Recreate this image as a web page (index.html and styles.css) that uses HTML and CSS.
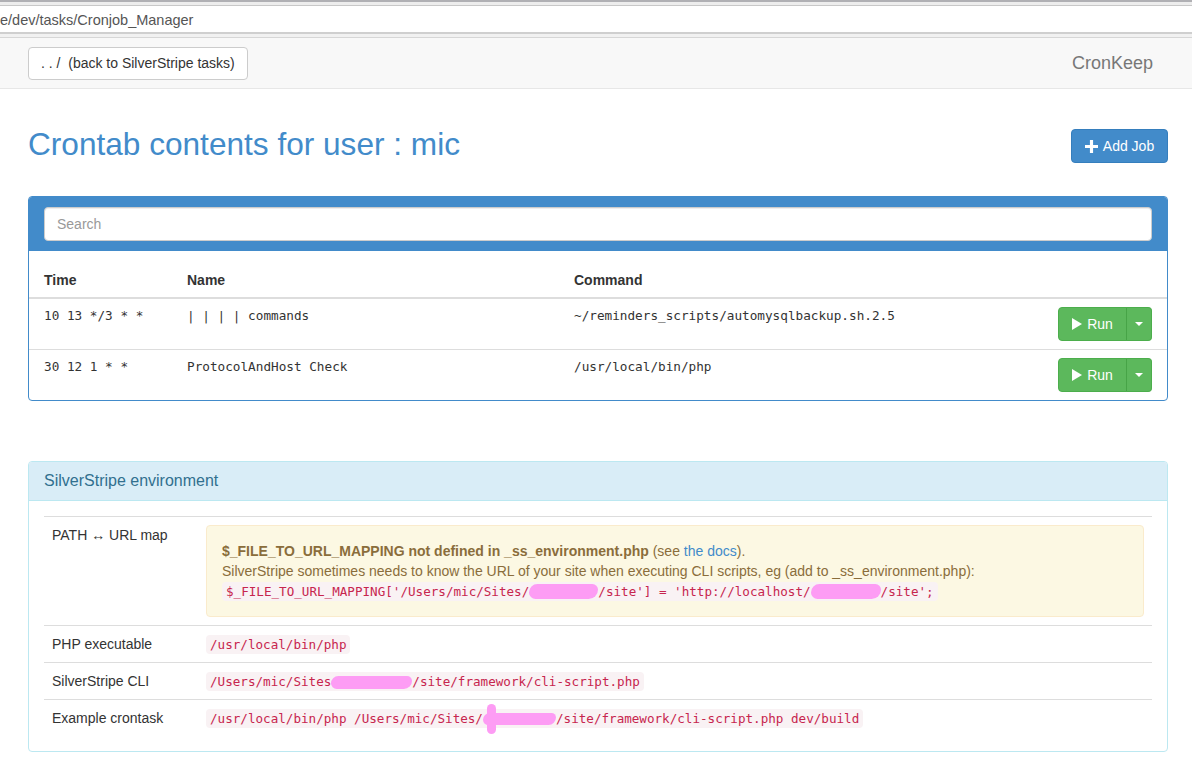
FILE: index.html
```html
<!DOCTYPE html>
<html lang="en">
<head>
<meta charset="utf-8">
<title>CronKeep</title>
<link rel="stylesheet" href="styles.css">
</head>
<body>
<div class="chrome">
  <div class="tabstrip"></div>
  <div class="urlbar"><span class="url">e/dev/tasks/Cronjob_Manager</span></div>
  <div class="chrome-sep"></div>
</div>

<nav class="navbar">
  <div class="container nav-inner">
    <a class="btn btn-default navbar-btn" href="#">. . /&nbsp;&nbsp;(back to SilverStripe tasks)</a>
    <span class="navbar-brand">CronKeep</span>
  </div>
</nav>

<div class="container">
  <div class="page-head">
    <h1 class="page-title">Crontab contents for user : mic</h1>
    <button class="btn btn-primary add-job">
      <svg class="icon-plus" viewBox="0 0 14 14" width="13" height="13"><path d="M5.3 0h3.4v5.3H14v3.4H8.7V14H5.3V8.7H0V5.3h5.3z" fill="#fff"/></svg>
      Add Job
    </button>
  </div>

  <div class="panel panel-primary jobs">
    <div class="panel-heading search-heading">
      <input class="form-control" type="text" placeholder="Search">
    </div>
    <table class="table jobs-table">
      <thead>
        <tr><th class="c-time">Time</th><th class="c-name">Name</th><th class="c-cmd">Command</th><th class="c-act"></th></tr>
      </thead>
      <tbody>
        <tr>
          <td class="mono">10 13 */3 * *</td>
          <td class="mono">| | | | commands</td>
          <td class="mono">~/reminders_scripts/automysqlbackup.sh.2.5</td>
          <td class="act">
            <div class="btn-group">
              <button class="btn btn-success run"><svg class="icon-play" viewBox="0 0 10 12" width="10" height="12"><path d="M0 0L10 6L0 12z" fill="#fff"/></svg>Run</button><button class="btn btn-success caret-btn"><span class="caret"></span></button>
            </div>
          </td>
        </tr>
        <tr>
          <td class="mono">30 12 1 * *</td>
          <td class="mono">ProtocolAndHost Check</td>
          <td class="mono">/usr/local/bin/php</td>
          <td class="act">
            <div class="btn-group">
              <button class="btn btn-success run"><svg class="icon-play" viewBox="0 0 10 12" width="10" height="12"><path d="M0 0L10 6L0 12z" fill="#fff"/></svg>Run</button><button class="btn btn-success caret-btn"><span class="caret"></span></button>
            </div>
          </td>
        </tr>
      </tbody>
    </table>
  </div>

  <div class="panel panel-info env">
    <div class="panel-heading"><h3 class="panel-title">SilverStripe environment</h3></div>
    <div class="panel-body">
      <table class="table env-table">
        <tbody>
          <tr>
            <td class="label-col">PATH &harr; URL map</td>
            <td>
              <div class="alert alert-warning">
                <strong>$_FILE_TO_URL_MAPPING not defined in _ss_environment.php</strong> (see <a href="#">the docs</a>).<br>
                SilverStripe sometimes needs to know the URL of your site when executing CLI scripts, eg (add to _ss_environment.php):<br>
                <code>$_FILE_TO_URL_MAPPING['/Users/mic/Sites/<span class="blob b1"></span>/site'] = 'http://localhost/<span class="blob b2"></span>/site';</code>
              </div>
            </td>
          </tr>
          <tr>
            <td class="label-col">PHP executable</td>
            <td><code>/usr/local/bin/php</code></td>
          </tr>
          <tr>
            <td class="label-col">SilverStripe CLI</td>
            <td><code>/Users/mic/Sites<span class="blob b3"></span>/site/framework/cli-script.php</code></td>
          </tr>
          <tr>
            <td class="label-col">Example crontask</td>
            <td><code>/usr/local/bin/php /Users/mic/Sites/<span class="blob b4"></span>/site/framework/cli-script.php dev/build</code></td>
          </tr>
        </tbody>
      </table>
    </div>
  </div>
</div>
</body>
</html>
```

FILE: styles.css
```css
* { box-sizing: border-box; }

html, body { margin: 0; padding: 0; background: #fff; }

body {
  font-family: "Liberation Sans", Arial, Helvetica, sans-serif;
  font-size: 14px;
  line-height: 20px;
  color: #333;
  width: 1192px;
  overflow: hidden;
}

/* ---------- browser chrome ---------- */
.chrome { height: 38px; }
.tabstrip {
  height: 6px;
  background: #ededed;
  border-top: 2px solid #b0b0b4;
  border-bottom: 1px solid #c8c8c8;
}
.urlbar {
  height: 26px;
  background: #fff;
  display: flex;
  align-items: center;
  overflow: hidden;
  padding-top: 2px;
}
.url {
  font-size: 14.5px;
  color: #555;
  white-space: nowrap;
}
.chrome-sep {
  height: 6px;
  background: #f1f1f1;
  border-top: 2px solid #cfcfcf;
  border-bottom: 1px solid #d6d6d6;
}

/* ---------- layout ---------- */
.container {
  width: 1140px;
  margin-left: 28px;
}

.navbar {
  height: 51px;
  background: #f8f8f8;
  border-bottom: 1px solid #e7e7e7;
  margin-bottom: 20px;
}
.nav-inner {
  height: 50px;
  display: flex;
  align-items: center;
  justify-content: space-between;
}
.navbar-brand {
  font-size: 18px;
  color: #777;
  padding-right: 15px;
  line-height: 20px;
}

/* ---------- buttons ---------- */
.btn {
  display: inline-flex;
  align-items: center;
  justify-content: center;
  height: 34px;
  padding: 6px 12px;
  font-family: inherit;
  font-size: 14px;
  line-height: 20px;
  border: 1px solid transparent;
  border-radius: 4px;
  text-decoration: none;
  cursor: pointer;
}
.btn-default {
  color: #333;
  background: #fff;
  border-color: #ccc;
}
.navbar-btn { height: 33px; }
.btn-primary {
  color: #fff;
  background: #428bca;
  border-color: #357ebd;
}
.btn-success {
  color: #fff;
  background: #5cb85c;
  border-color: #4cae4c;
}

/* ---------- page head ---------- */
.page-head {
  display: flex;
  justify-content: space-between;
  align-items: flex-start;
  padding-top: 18px;
  margin-bottom: 33px;
}
.page-title {
  margin: 0;
  font-size: 31.6px;
  line-height: 34px;
  font-weight: 500;
  color: #428bca;
}
.add-job {
  margin-top: 2px;
  width: 97px;
  padding: 6px 10px;
  gap: 5px;
}
.icon-plus { display: block; }

/* ---------- panels ---------- */
.panel {
  background: #fff;
  border: 1px solid transparent;
  border-radius: 4px;
}
.panel-primary { border-color: #428bca; }
.panel-primary > .panel-heading {
  background: #428bca;
  border-bottom: 1px solid #428bca;
}
.panel-heading {
  padding: 10px 15px;
  border-top-left-radius: 3px;
  border-top-right-radius: 3px;
}
.search-heading { padding: 10px 15px 9px; }
.form-control {
  display: block;
  width: 100%;
  height: 34px;
  padding: 6px 12px;
  font-family: inherit;
  font-size: 14px;
  color: #555;
  background: #fff;
  border: 1px solid #ccc;
  border-radius: 4px;
  box-shadow: inset 0 1px 1px rgba(0,0,0,.075);
}
.form-control::placeholder { color: #999; }

.jobs { margin-bottom: 60px; }

.table {
  width: 100%;
  border-collapse: collapse;
  border-spacing: 0;
}
.jobs-table th {
  text-align: left;
  font-weight: bold;
  padding: 19px 8px 7px;
  line-height: 20px;
  border-bottom: 2px solid #ddd;
  vertical-align: bottom;
}
.jobs-table td {
  padding: 8px;
  vertical-align: top;
  border-top: 1px solid #ddd;
}
.jobs-table tbody tr:first-child td { border-top: 0; }
.jobs-table th:first-child,
.jobs-table td:first-child { padding-left: 15px; }
.jobs-table th:last-child,
.jobs-table td:last-child { padding-right: 15px; }
.c-time { width: 150px; }
.c-name { width: 387px; }
.c-act { width: 124px; }
.mono {
  font-family: "DejaVu Sans Mono", "Liberation Mono", monospace;
  font-size: 12.7px;
  line-height: 18px;
}
.act { text-align: right; }
.btn-group { display: inline-flex; }
.run {
  width: 69px;
  gap: 5px;
  padding: 6px 10px;
  border-top-right-radius: 0;
  border-bottom-right-radius: 0;
  border-right-color: #4cae4c;
}
.icon-play { display: block; }
.caret-btn {
  width: 26px;
  padding: 0;
  margin-left: -1px;
  border-top-left-radius: 0;
  border-bottom-left-radius: 0;
  border-left-color: #47a447;
}
.caret {
  display: block;
  width: 0;
  height: 0;
  border-top: 4px solid #fff;
  border-left: 4px solid transparent;
  border-right: 4px solid transparent;
}

/* ---------- env panel ---------- */
.panel-info { border-color: #bce8f1; }
.panel-info > .panel-heading {
  background: #d9edf7;
  color: #31708f;
  border-bottom: 1px solid #bce8f1;
}
.panel-title {
  margin: 0;
  font-size: 16px;
  font-weight: 500;
  line-height: 17.6px;
}
.panel-body { padding: 15px; }
.env-table td {
  padding: 8px;
  vertical-align: top;
  border-top: 1px solid #ddd;
  line-height: 20px;
}
.label-col { width: 154px; }

.alert {
  padding: 15px;
  border: 1px solid transparent;
  border-radius: 4px;
}
.alert-warning {
  background: #fcf8e3;
  border-color: #faebcc;
  color: #8a6d3b;
}
.alert a { color: #428bca; text-decoration: none; }

code {
  font-family: "DejaVu Sans Mono", "Liberation Mono", monospace;
  font-size: 12.6px;
  line-height: 1;
  padding: 2px 4px;
  color: #c7254e;
  background: #f9f2f4;
  border-radius: 4px;
  white-space: nowrap;
}

/* redaction scribbles */
.blob {
  display: inline-block;
  position: relative;
  height: 15px;
  vertical-align: -3px;
  background: #fd9cf4;
  border-radius: 9px 6px 10px 7px;
}
.b1 { width: 69px; }
.b2 { width: 70px; }
.b3 { width: 81px; height: 13px; vertical-align: -3px; }
.b4 { width: 73px; height: 12px; vertical-align: -2px; }
.b4::before {
  content: "";
  position: absolute;
  left: 4px;
  top: -9px;
  width: 9px;
  height: 30px;
  background: #fd9cf4;
  border-radius: 5px;
}
```
